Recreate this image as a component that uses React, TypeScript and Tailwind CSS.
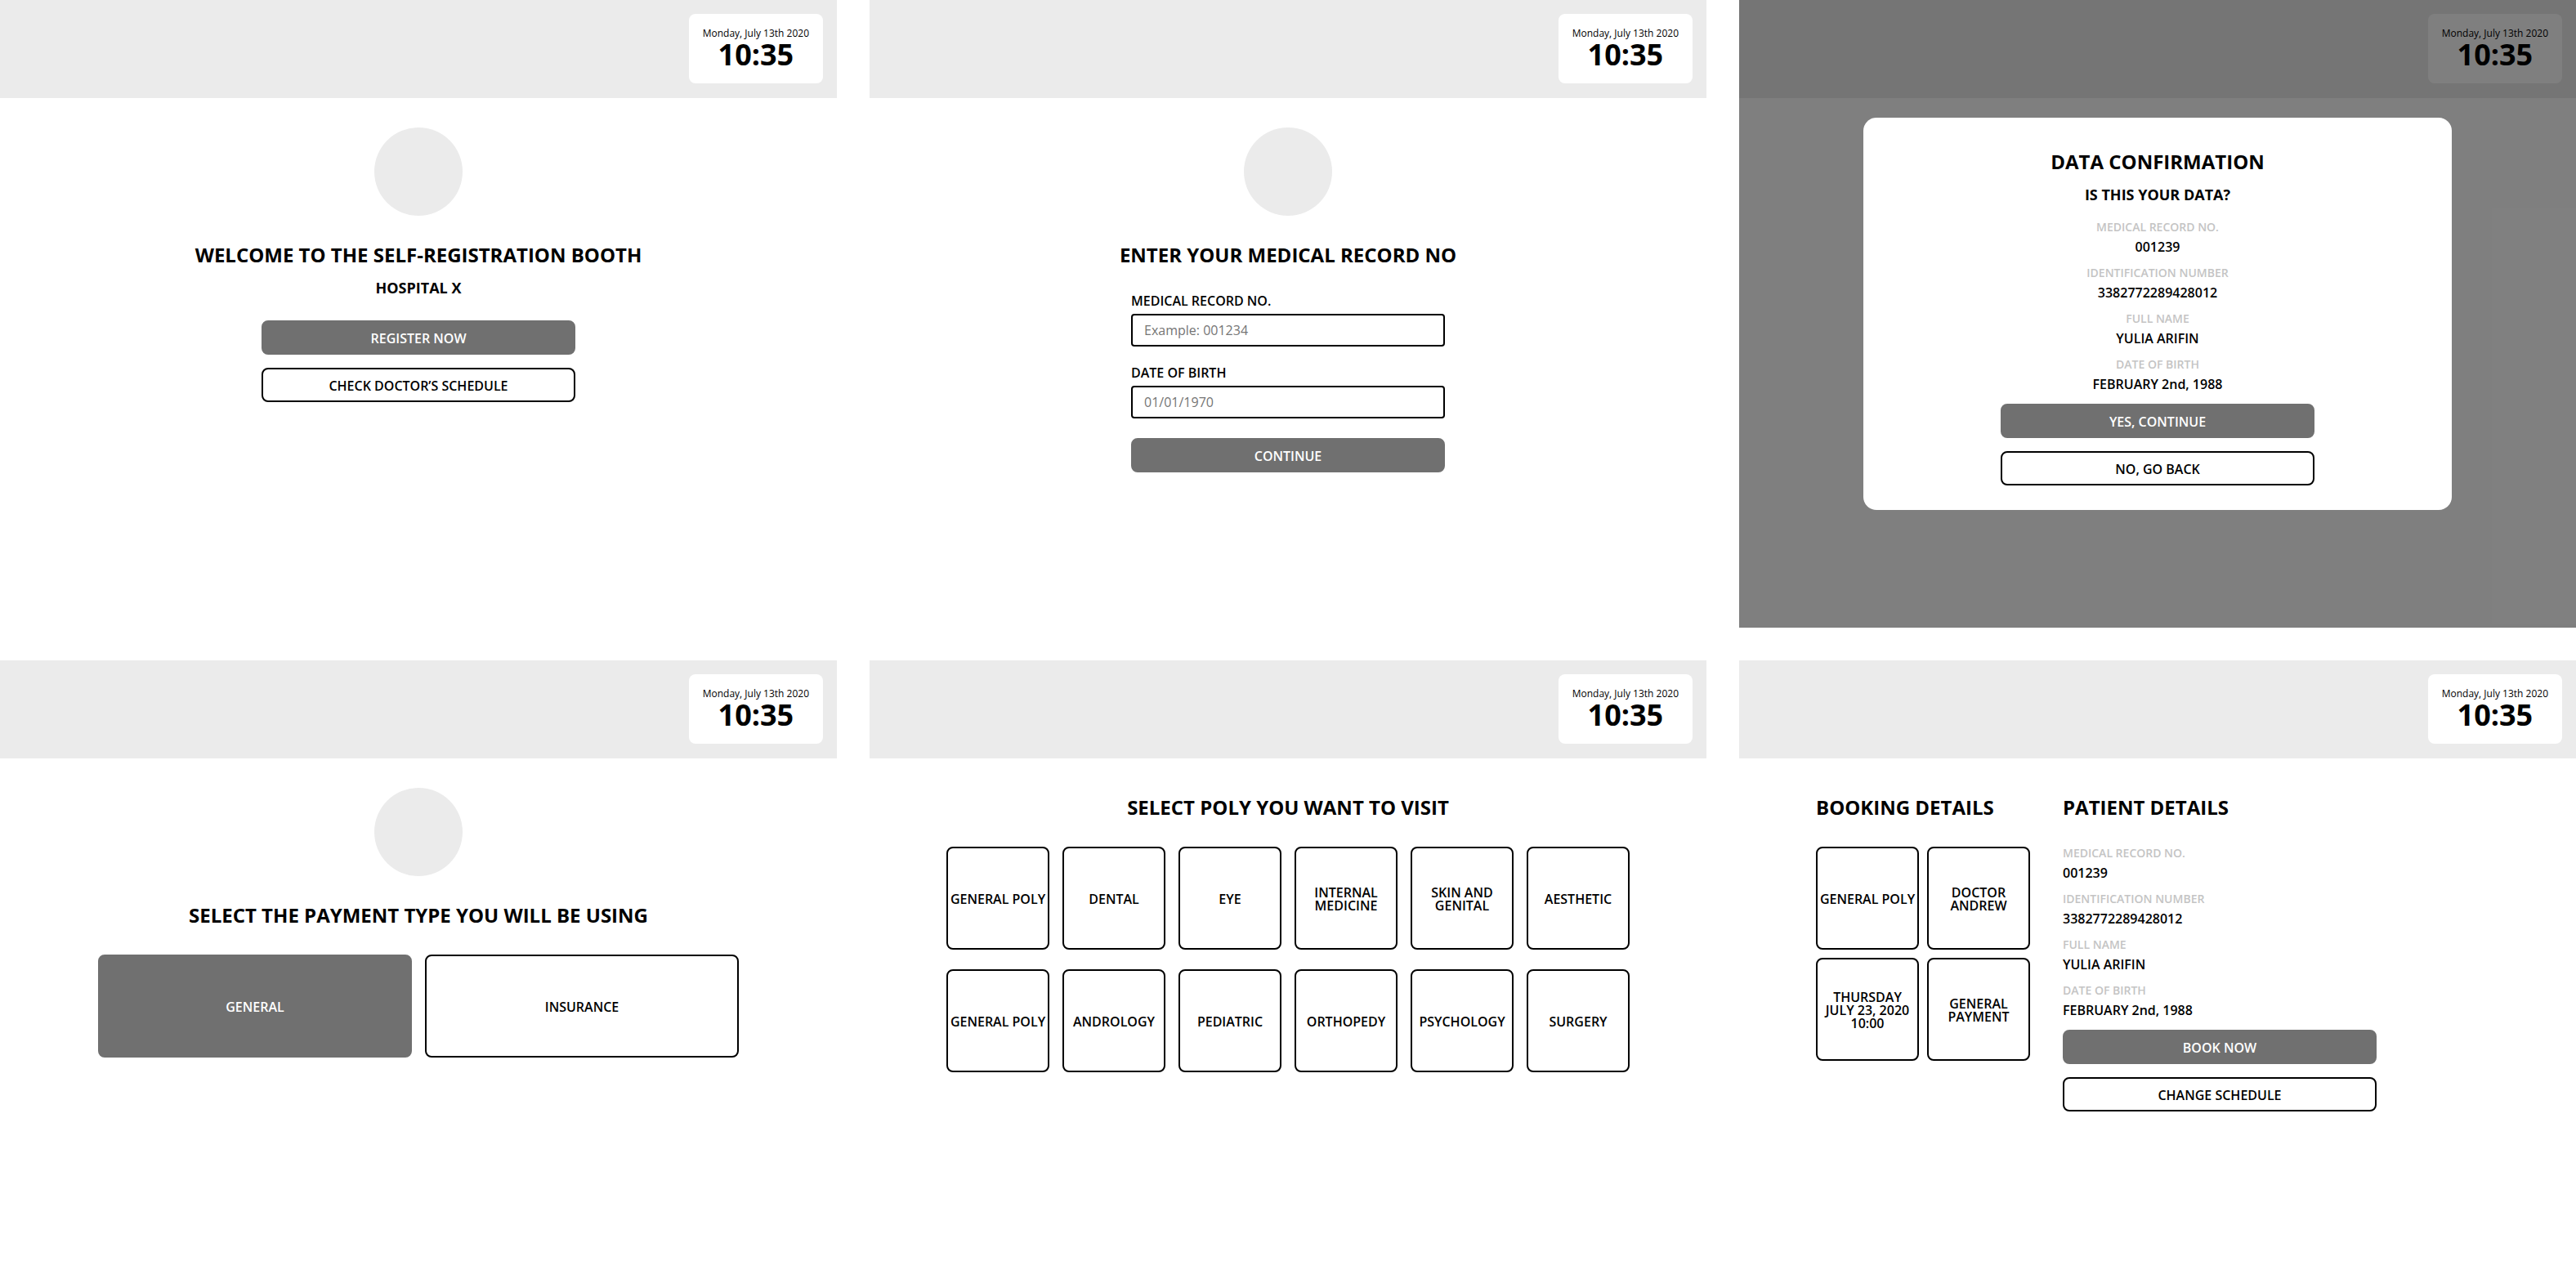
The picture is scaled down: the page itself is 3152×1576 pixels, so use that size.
import type { ReactNode } from "react";

function Clock() {
  return (
    <div className="flex min-h-[85px] flex-col items-center justify-center gap-0.5 rounded-lg bg-white px-[17px]">
      <p className="text-[12px] leading-3">Monday, July 13th 2020</p>
      <p className="text-4xl leading-9 font-bold">10:35</p>
    </div>
  );
}

function Screen({ children }: { children?: ReactNode }) {
  return (
    <section className="relative flex min-h-[768px] flex-col bg-white">
      <header className="flex min-h-[120px] items-start justify-end bg-[#ebebeb] p-[17px]">
        <Clock />
      </header>
      {children}
    </section>
  );
}

function Logo() {
  return <div className="size-27 rounded-full bg-[#ebebeb]" />;
}

function Heading({ children }: { children: ReactNode }) {
  return <h2 className="text-2xl leading-6 font-bold">{children}</h2>;
}

function Subheading({ children }: { children: ReactNode }) {
  return <p className="mt-5 text-lg leading-4 font-bold">{children}</p>;
}

function Button({ children, primary = false }: { children: ReactNode; primary?: boolean }) {
  const tone = primary ? "border-[#707070] bg-[#707070] text-white" : "border-black bg-white text-black";
  return (
    <button
      type="button"
      className={`h-[42px] w-full rounded-lg border-2 pt-0.5 text-base leading-4 font-semibold ${tone}`}
    >
      {children}
    </button>
  );
}

function Choice({ children, primary = false }: { children: ReactNode; primary?: boolean }) {
  const tone = primary ? "border-[#707070] bg-[#707070] text-white" : "border-black bg-white text-black";
  return (
    <button
      type="button"
      className={`h-[126px] w-full rounded-lg border-2 pt-0.5 text-base leading-4 font-semibold ${tone}`}
    >
      {children}
    </button>
  );
}

function Field({ id, label, placeholder }: { id: string; label: string; placeholder: string }) {
  return (
    <div className="flex flex-col gap-2">
      <label htmlFor={id} className="text-base leading-4 font-semibold">
        {label}
      </label>
      <input
        id={id}
        type="text"
        placeholder={placeholder}
        className="h-10 w-full rounded-sm border-2 border-black px-3.5 text-base placeholder:text-[#757575]"
      />
    </div>
  );
}

const patient = [
  ["MEDICAL RECORD NO.", "001239"],
  ["IDENTIFICATION NUMBER", "3382772289428012"],
  ["FULL NAME", "YULIA ARIFIN"],
  ["DATE OF BIRTH", "FEBRUARY 2nd, 1988"],
];

function PatientData() {
  return (
    <dl className="flex flex-col gap-4">
      {patient.map(([label, value]) => (
        <div key={label} className="flex flex-col gap-2">
          <dt className="text-sm leading-4 font-semibold text-[#c4c4c4]">{label}</dt>
          <dd className="text-base leading-4 font-semibold">{value}</dd>
        </div>
      ))}
    </dl>
  );
}

function Welcome() {
  return (
    <Screen>
      <main className="flex flex-col items-center pt-9">
        <Logo />
        <div className="mt-9 text-center">
          <Heading>WELCOME TO THE SELF-REGISTRATION BOOTH</Heading>
          <Subheading>HOSPITAL X</Subheading>
        </div>
        <div className="mt-8 flex w-full max-w-96 flex-col gap-4">
          <Button primary>REGISTER NOW</Button>
          <Button>CHECK DOCTOR’S SCHEDULE</Button>
        </div>
      </main>
    </Screen>
  );
}

function RecordForm() {
  return (
    <Screen>
      <main className="flex flex-col items-center gap-9 pt-9">
        <Logo />
        <Heading>ENTER YOUR MEDICAL RECORD NO</Heading>
        <form className="flex w-full max-w-96 flex-col gap-6">
          <Field id="record" label="MEDICAL RECORD NO." placeholder="Example: 001234" />
          <Field id="birth" label="DATE OF BIRTH" placeholder="01/01/1970" />
          <Button primary>CONTINUE</Button>
        </form>
      </main>
    </Screen>
  );
}

function Confirmation() {
  return (
    <Screen>
      <div className="absolute inset-0 flex items-start justify-center bg-black/50 pt-36">
        <div
          role="dialog"
          aria-label="Data confirmation"
          className="flex w-full max-w-[720px] flex-col items-center rounded-2xl bg-white pt-[42px] pb-[30px] text-center"
        >
          <Heading>DATA CONFIRMATION</Heading>
          <Subheading>IS THIS YOUR DATA?</Subheading>
          <div className="mt-6 flex w-full max-w-96 flex-col gap-4">
            <PatientData />
            <Button primary>YES, CONTINUE</Button>
            <Button>NO, GO BACK</Button>
          </div>
        </div>
      </div>
    </Screen>
  );
}

function Payment() {
  return (
    <Screen>
      <main className="flex flex-col items-center gap-9 pt-9">
        <Logo />
        <Heading>SELECT THE PAYMENT TYPE YOU WILL BE USING</Heading>
        <div className="grid w-full max-w-[784px] grid-cols-2 gap-4">
          <Choice primary>GENERAL</Choice>
          <Choice>INSURANCE</Choice>
        </div>
      </main>
    </Screen>
  );
}

const polys = [
  "GENERAL POLY",
  "DENTAL",
  "EYE",
  "INTERNAL MEDICINE",
  "SKIN AND GENITAL",
  "AESTHETIC",
  "GENERAL POLY",
  "ANDROLOGY",
  "PEDIATRIC",
  "ORTHOPEDY",
  "PSYCHOLOGY",
  "SURGERY",
];

function PolySelection() {
  return (
    <Screen>
      <main className="flex flex-col items-center gap-9 pt-12">
        <Heading>SELECT POLY YOU WANT TO VISIT</Heading>
        <div className="grid w-full max-w-[836px] grid-cols-6 gap-x-4 gap-y-6">
          {polys.map((name, i) => (
            <Choice key={i}>{name}</Choice>
          ))}
        </div>
      </main>
    </Screen>
  );
}

function Booking() {
  return (
    <Screen>
      <main className="flex gap-10 px-[94px] pt-12">
        <div className="flex w-full max-w-[262px] flex-col gap-9">
          <Heading>BOOKING DETAILS</Heading>
          <div className="grid grid-cols-2 gap-2.5">
            <Choice>GENERAL POLY</Choice>
            <Choice>DOCTOR ANDREW</Choice>
            <Choice>
              THURSDAY
              <br />
              JULY 23, 2020
              <br />
              10:00
            </Choice>
            <Choice>GENERAL PAYMENT</Choice>
          </div>
        </div>
        <div className="flex w-full max-w-96 flex-col gap-9">
          <Heading>PATIENT DETAILS</Heading>
          <div className="flex flex-col gap-4">
            <PatientData />
            <Button primary>BOOK NOW</Button>
            <Button>CHANGE SCHEDULE</Button>
          </div>
        </div>
      </main>
    </Screen>
  );
}

export default function App() {
  return (
    <div className="grid grid-cols-3 gap-10 bg-white font-['Open_Sans',sans-serif] text-black">
      <Welcome />
      <RecordForm />
      <Confirmation />
      <Payment />
      <PolySelection />
      <Booking />
    </div>
  );
}
